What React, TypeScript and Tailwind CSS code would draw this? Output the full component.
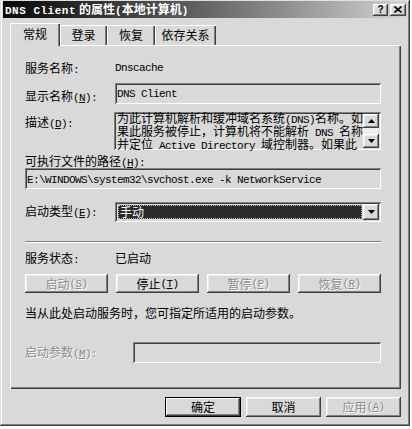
import React from "react";

const raised =
  "bg-[#d9d9d9] shadow-[inset_-1px_-1px_#404040,inset_1px_1px_#ffffff,inset_-2px_-2px_#808080,inset_2px_2px_#ececec]";
const sunken =
  "shadow-[inset_1px_1px_#808080,inset_-1px_-1px_#ffffff,inset_2px_2px_#404040,inset_-2px_-2px_#d9d9d9]";
const dim = "text-[#8a8a8a] [text-shadow:1px_1px_0_#ffffff]";

function Mono({ children, cls = "tracking-[-0.6px]" }: { children: React.ReactNode; cls?: string }) {
  return <span className={`font-[family-name:'Liberation_Mono',monospace] text-[11px] ${cls}`}>{children}</span>;
}

// half-width runs in mono, the rest in the CJK face
function Mix({ text }: { text: string }) {
  const parts = text.split(/([\x20-\x7e]+)/).filter(Boolean);
  return (
    <>
      {parts.map((p, i) =>
        /^[\x20-\x7e]+$/.test(p) ? <Mono key={i}>{p}</Mono> : <span key={i}>{p}</span>
      )}
    </>
  );
}

function Label({ text, k }: { text: string; k?: string }) {
  return (
    <span className="whitespace-pre">
      {text}
      {k ? (
        <Mono>
          (<u>{k}</u>):
        </Mono>
      ) : (
        <Mono>:</Mono>
      )}
    </span>
  );
}

function Btn({ text, k, disabled, def, w = "" }: { text: string; k?: string; disabled?: boolean; def?: boolean; w?: string }) {
  const skin = def
    ? "bg-[#d9d9d9] shadow-[inset_0_0_0_1px_#000000,inset_-2px_-2px_#404040,inset_2px_2px_#ffffff,inset_-3px_-3px_#808080]"
    : raised;
  return (
    <div className={`flex h-full items-center justify-center whitespace-pre ${skin} ${w} ${disabled ? dim : ""}`}>
      {text}
      {k && (
        <Mono>
          (<u>{k}</u>)
        </Mono>
      )}
    </div>
  );
}

function Tri({ up }: { up?: boolean }) {
  return (
    <svg width="7" height="4" viewBox="0 0 7 4">
      <polygon points={up ? "3.5,0 7,4 0,4" : "0,0 7,0 3.5,4"} fill="#000" />
    </svg>
  );
}

function Tab({ children, w }: { children: React.ReactNode; w: string }) {
  return (
    <div className={`flex h-[20px] ${w} items-center justify-center pb-[1px] shadow-[inset_1px_1px_#ffffff,inset_-1px_0_#404040,inset_-2px_0_#808080]`}>
      {children}
    </div>
  );
}

export default function App() {
  return (
    <div className="h-[429px] w-[412px] bg-white font-[family-name:'Noto_Sans_CJK_SC',sans-serif] text-[12px] leading-[16px] text-black">
      <div className="h-[426px] w-[410px] bg-[#d9d9d9] px-[3px] pt-[1px] shadow-[inset_-1px_-1px_#404040,inset_1px_1px_#e0e0e0,inset_-2px_-2px_#808080,inset_2px_2px_#ffffff]">
        {/* caption */}
        <div className="flex h-[17px] items-center justify-between bg-linear-to-r from-[#0a0a0a] to-[#d4d4d4] pl-[2px] pr-[1px]">
          <span className="whitespace-pre font-bold text-white">
            <Mono cls="tracking-[0.5px]">DNS Client</Mono>
            <span className="ml-[3px]">的属性</span>
            <Mono cls="tracking-[0px]">(</Mono>本地计算机<Mono cls="tracking-[0px]">)</Mono>
          </span>
          <div className="flex gap-[2px]">
            <div className={`flex h-[12px] w-[15px] items-center justify-center font-[family-name:'Liberation_Sans',sans-serif] text-[10px] leading-none font-bold ${raised}`}>
              ?
            </div>
            <div className={`flex h-[12px] w-[16px] items-center justify-center ${raised}`}>
              <svg width="8" height="7" viewBox="0 0 8 7">
                <path d="M0.5 0.5 L7.5 6.5 M7.5 0.5 L0.5 6.5" stroke="#000" strokeWidth="1.6" />
              </svg>
            </div>
          </div>
        </div>

        {/* tabs */}
        <div className="ml-[7px] mt-[5px] flex h-[22px] items-end">
          <div className="relative z-10 -mb-[1px] flex h-[23px] w-[50px] items-center justify-center bg-[#d9d9d9] pb-[2px] shadow-[inset_1px_1px_#ffffff,inset_-1px_0_#404040,inset_-2px_0_#808080]">
            常规
          </div>
          <Tab w="w-[47px]">登录</Tab>
          <Tab w="w-[48px]">恢复</Tab>
          <Tab w="w-[61px]">依存关系</Tab>
        </div>

        {/* page */}
        <div className="ml-[7px] h-[344px] w-[391px] pl-[15px] pr-[20px] pt-[15px] shadow-[inset_1px_1px_#ffffff,inset_-1px_-1px_#404040,inset_-2px_-2px_#808080]">
          <div className="flex h-[16px]">
            <div className="w-[90px]">
              <Label text="服务名称" />
            </div>
            <Mono>Dnscache</Mono>
          </div>

          <div className="mt-[7px] flex h-[21px]">
            <div className="w-[90px] pt-[5px]">
              <Label text="显示名称" k="N" />
            </div>
            <div className={`flex-1 whitespace-pre pl-[2px] pt-[1px] ${sunken}`}>
              <Mono>DNS Client</Mono>
            </div>
          </div>

          <div className="mt-[8px] flex h-[38px]">
            <div className="w-[90px] pt-[2px]">
              <Label text="描述" k="D" />
            </div>
            <div className={`flex flex-1 p-[2px] ${sunken}`}>
              <div className="-mt-[3px] flex-1 overflow-x-clip whitespace-pre pl-[1px]">
                <div className="h-[13px] leading-[13px]"><Mix text="为此计算机解析和缓冲域名系统(DNS)名称。如" /></div>
                <div className="h-[13px] leading-[13px]"><Mix text="果此服务被停止，计算机将不能解析 DNS 名称" /></div>
                <div className="h-[13px] leading-[13px]"><Mix text="并定位 Active Directory 域控制器。如果此" /></div>
              </div>
              <div className="flex w-[16px] flex-col">
                <div className={`flex h-[14px] items-center justify-center ${raised}`}>
                  <Tri up />
                </div>
                <div className="flex-1 bg-[#eeeeee]" />
                <div className={`flex h-[14px] items-center justify-center ${raised}`}>
                  <Tri />
                </div>
              </div>
            </div>
          </div>

          <div className="mt-[4px] h-[14px] leading-[14px]">
            <Label text="可执行文件的路径" k="H" />
          </div>
          <div className={`h-[21px] whitespace-pre pl-[2px] pt-[2px] ${sunken}`}>
            <Mono>{"E:\\WINDOWS\\system32\\svchost.exe -k NetworkService"}</Mono>
          </div>

          <div className="mt-[13px] flex h-[20px] items-center">
            <div className="w-[90px]">
              <Label text="启动类型" k="E" />
            </div>
            <div className={`flex h-[20px] flex-1 p-[2px] ${sunken}`}>
              <div className="m-[1px] flex flex-1 items-center border border-dotted border-[#bbbbbb] bg-[#2a2a2a] pl-[1px] text-white">
                手动
              </div>
              <div className={`flex w-[16px] items-center justify-center ${raised}`}>
                <Tri />
              </div>
            </div>
          </div>

          <div className="mt-[19px] h-[2px] border-t border-b border-t-[#808080] border-b-white" />

          <div className="mt-[7px] flex h-[16px]">
            <div className="w-[90px]">
              <Label text="服务状态" />
            </div>
            已启动
          </div>

          <div className="mt-[8px] grid h-[19px] grid-cols-4 gap-[8px]">
            <Btn text="启动" k="S" disabled />
            <Btn text="停止" k="T" />
            <Btn text="暂停" k="P" disabled />
            <Btn text="恢复" k="R" disabled />
          </div>

          <div className="mt-[12px] h-[16px]">当从此处启动服务时，您可指定所适用的启动参数。</div>

          <div className="mt-[21px] flex h-[21px] items-center">
            <div className={`w-[108px] ${dim}`}>
              <Label text="启动参数" k="M" />
            </div>
            <div className={`h-[21px] flex-1 ${sunken}`} />
          </div>
        </div>

        {/* dialog buttons */}
        <div className="ml-[7px] mt-[8px] flex h-[20px] w-[391px] justify-end gap-[5px]">
          <Btn text="确定" def w="w-[76px]" />
          <Btn text="取消" w="w-[75px]" />
          <Btn text="应用" k="A" disabled w="w-[75px]" />
        </div>
      </div>
    </div>
  );
}
